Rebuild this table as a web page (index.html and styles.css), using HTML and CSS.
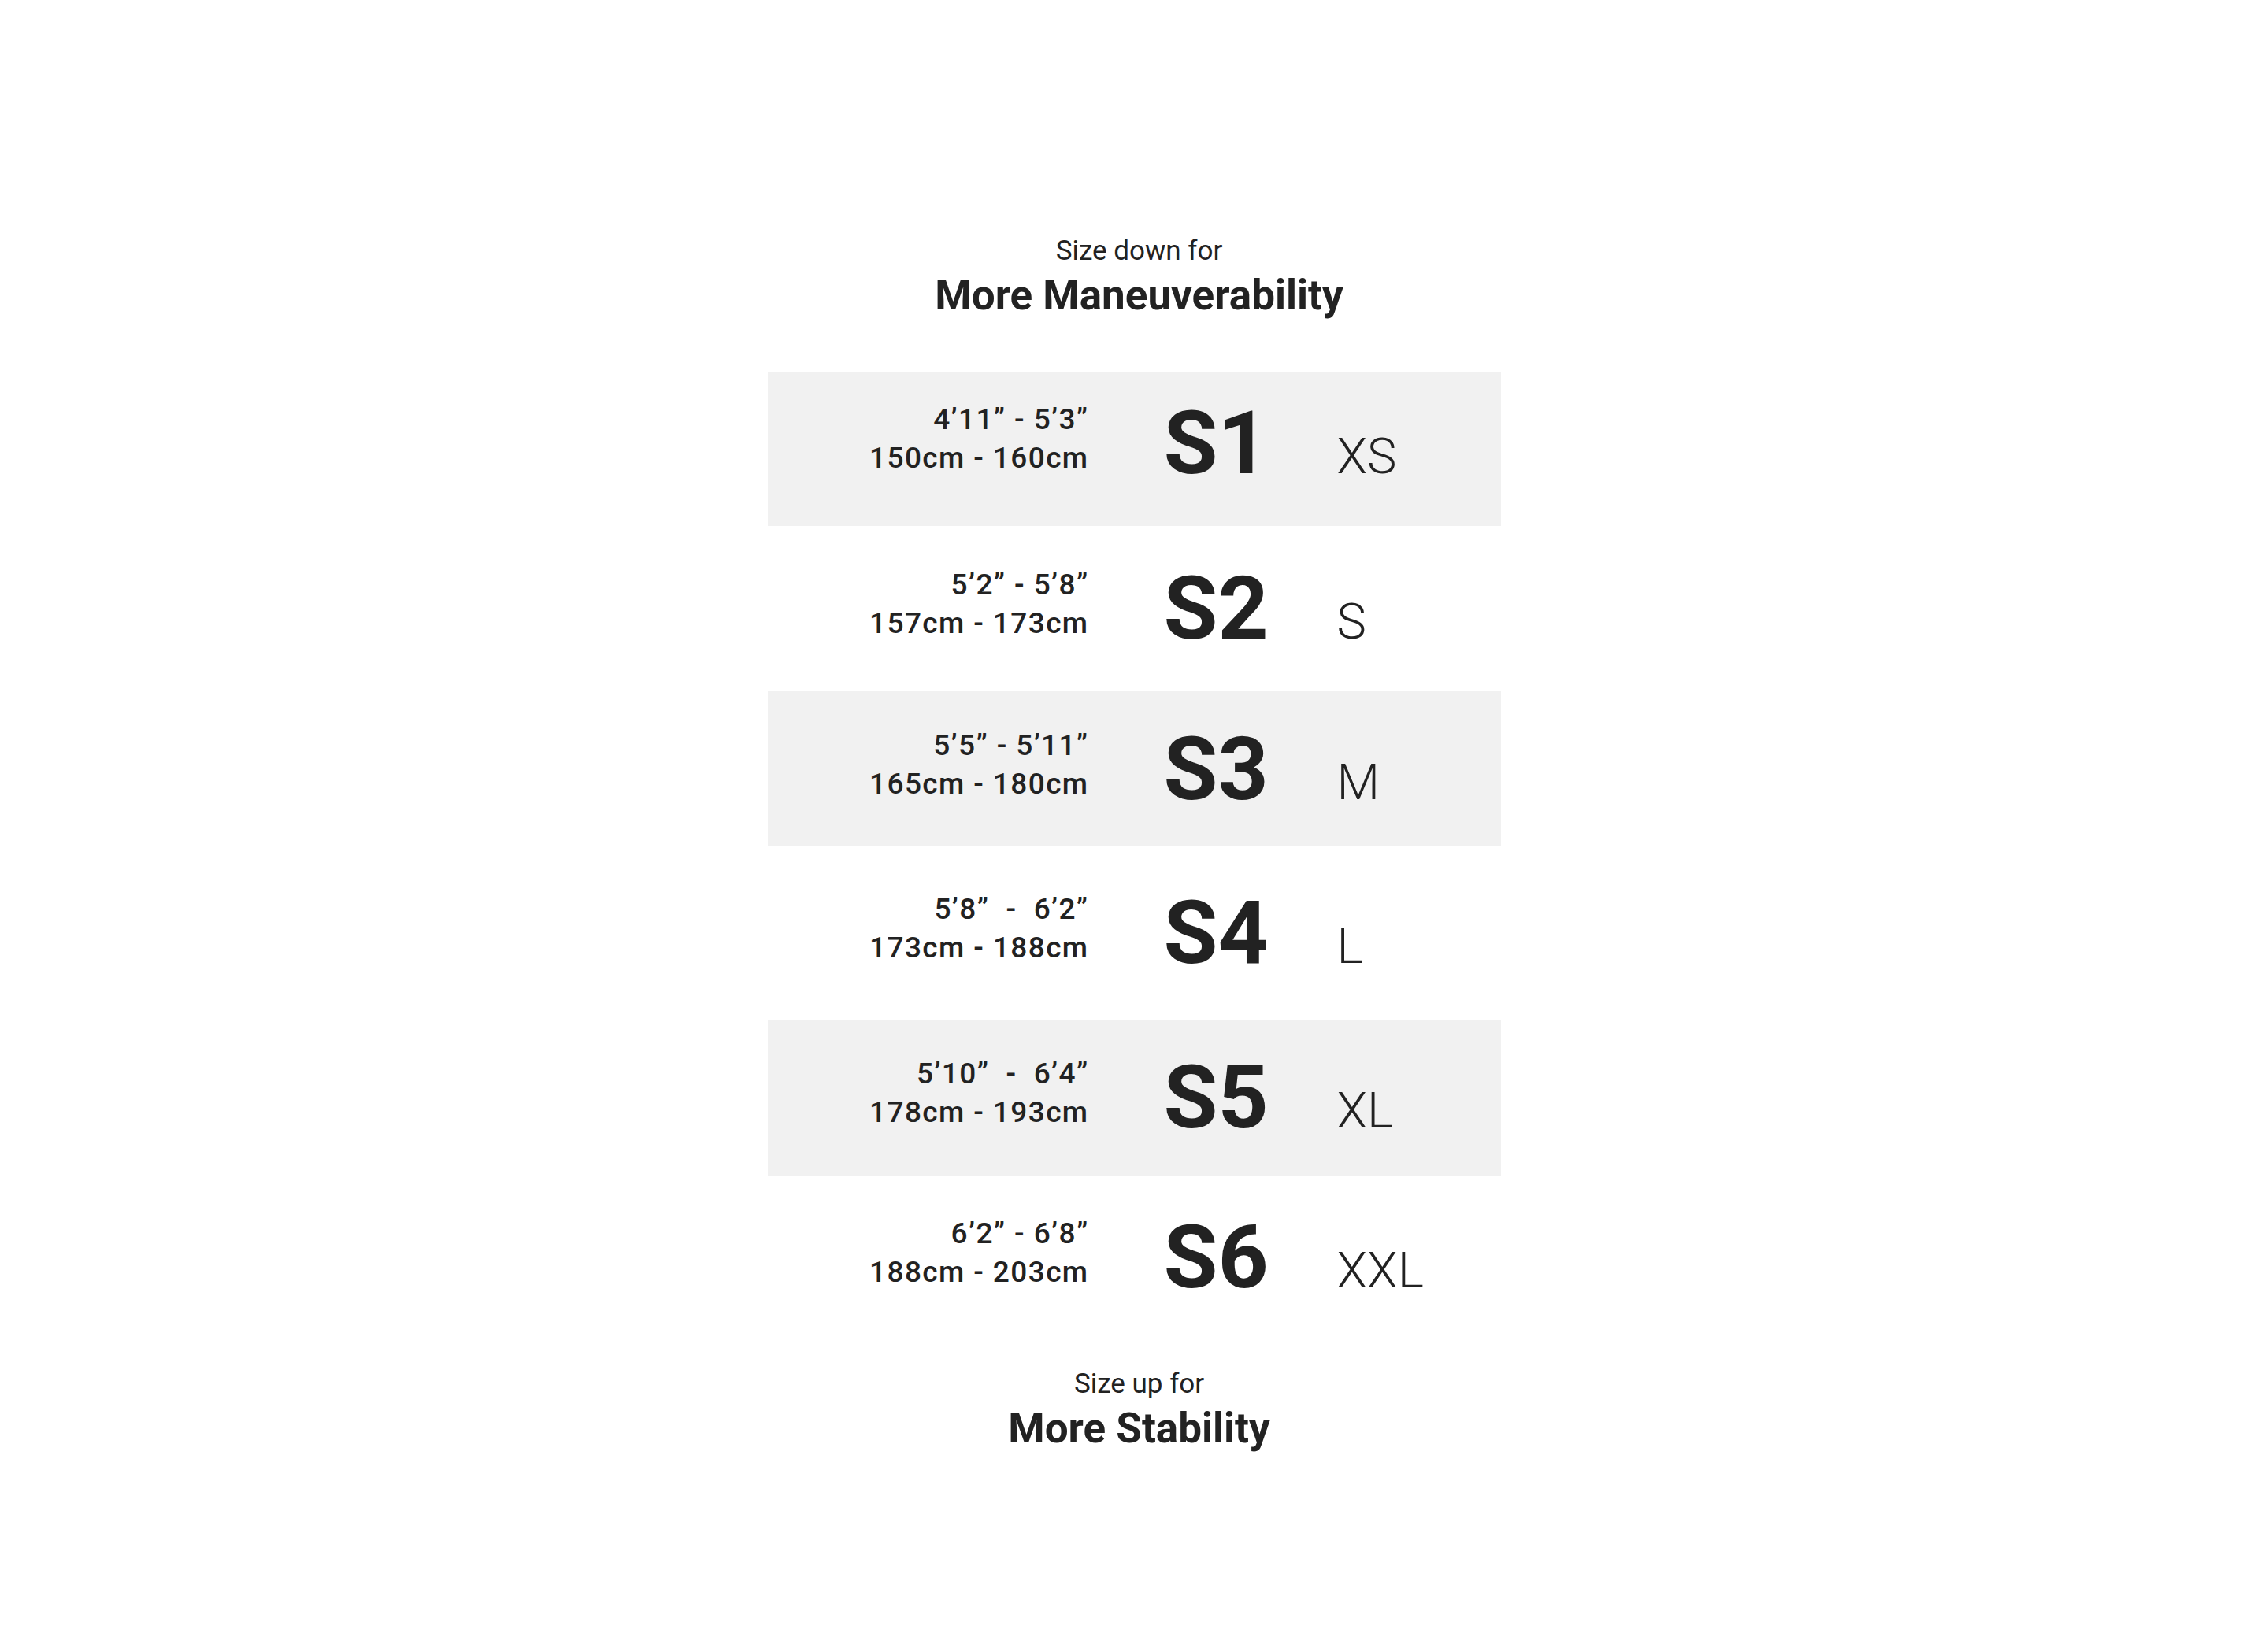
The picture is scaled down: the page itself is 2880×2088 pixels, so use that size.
FILE: index.html
```html
<!DOCTYPE html>
<html lang="en">
<head>
<meta charset="utf-8">
<title>Size Chart</title>
<link rel="stylesheet" href="styles.css">
</head>
<body>
<main class="chart">
  <header class="note note-top">
    <p class="note-lead">Size down for</p>
    <h2 class="note-title">More Maneuverability</h2>
  </header>

  <div class="table">
    <div class="row shaded">
      <div class="range"><span>4’11” - 5’3”</span><span>150cm - 160cm</span></div>
      <div class="fit"><span class="code">S1</span><span class="letter">XS</span></div>
    </div>
    <div class="row">
      <div class="range"><span>5’2” - 5’8”</span><span>157cm - 173cm</span></div>
      <div class="fit"><span class="code">S2</span><span class="letter">S</span></div>
    </div>
    <div class="row shaded">
      <div class="range"><span>5’5” - 5’11”</span><span>165cm - 180cm</span></div>
      <div class="fit"><span class="code">S3</span><span class="letter">M</span></div>
    </div>
    <div class="row">
      <div class="range"><span>5’8”  -  6’2”</span><span>173cm - 188cm</span></div>
      <div class="fit"><span class="code">S4</span><span class="letter">L</span></div>
    </div>
    <div class="row shaded">
      <div class="range"><span>5’10”  -  6’4”</span><span>178cm - 193cm</span></div>
      <div class="fit"><span class="code">S5</span><span class="letter">XL</span></div>
    </div>
    <div class="row">
      <div class="range"><span>6’2” - 6’8”</span><span>188cm - 203cm</span></div>
      <div class="fit"><span class="code">S6</span><span class="letter">XXL</span></div>
    </div>
  </div>

  <footer class="note note-bottom">
    <p class="note-lead">Size up for</p>
    <h2 class="note-title">More Stability</h2>
  </footer>
</main>
</body>
</html>
```

FILE: styles.css
```css
* { box-sizing: border-box; }

html, body {
  margin: 0;
  padding: 0;
  background: #ffffff;
}

body {
  font-family: Roboto, "Liberation Sans", sans-serif;
  color: #222222;
}

.chart {
  display: flex;
  flex-direction: column;
  align-items: center;
  padding-top: 299px;
}

.note {
  display: flex;
  flex-direction: column;
  align-items: center;
  padding-left: 13px;
}

.note-lead {
  margin: 0 0 6px;
  font-size: 35px;
  line-height: 40px;
  font-weight: 400;
}

.note-title {
  margin: 0;
  font-size: 53px;
  line-height: 60px;
  font-weight: 700;
}

.note-top { margin-bottom: 67px; }
.note-bottom { margin-top: 37px; }

.table {
  width: 931px;
  display: flex;
  flex-direction: column;
}

.row {
  display: flex;
  align-items: center;
  height: 208px;
}

.row:nth-child(1) { height: 196px; padding-bottom: 14px; }
.row:nth-child(2) { height: 210px; }
.row:nth-child(3) { height: 197px; }
.row:nth-child(4) { height: 220px; }
.row:nth-child(5) { height: 198px; }
.row:nth-child(6) { height: 208px; }

.shaded { background: #f1f1f1; }

.range {
  width: 408px;
  display: flex;
  flex-direction: column;
  align-items: flex-end;
  font-size: 37px;
  line-height: 49px;
  letter-spacing: 1.4px;
  font-weight: 500;
  white-space: pre;
  margin-bottom: 12px;
}

.fit {
  margin-left: 95px;
  display: flex;
  align-items: baseline;
}

.code {
  width: 220px;
  font-size: 112px;
  line-height: 112px;
  font-weight: 700;
}

.letter {
  font-size: 63px;
  font-weight: 300;
}
```
